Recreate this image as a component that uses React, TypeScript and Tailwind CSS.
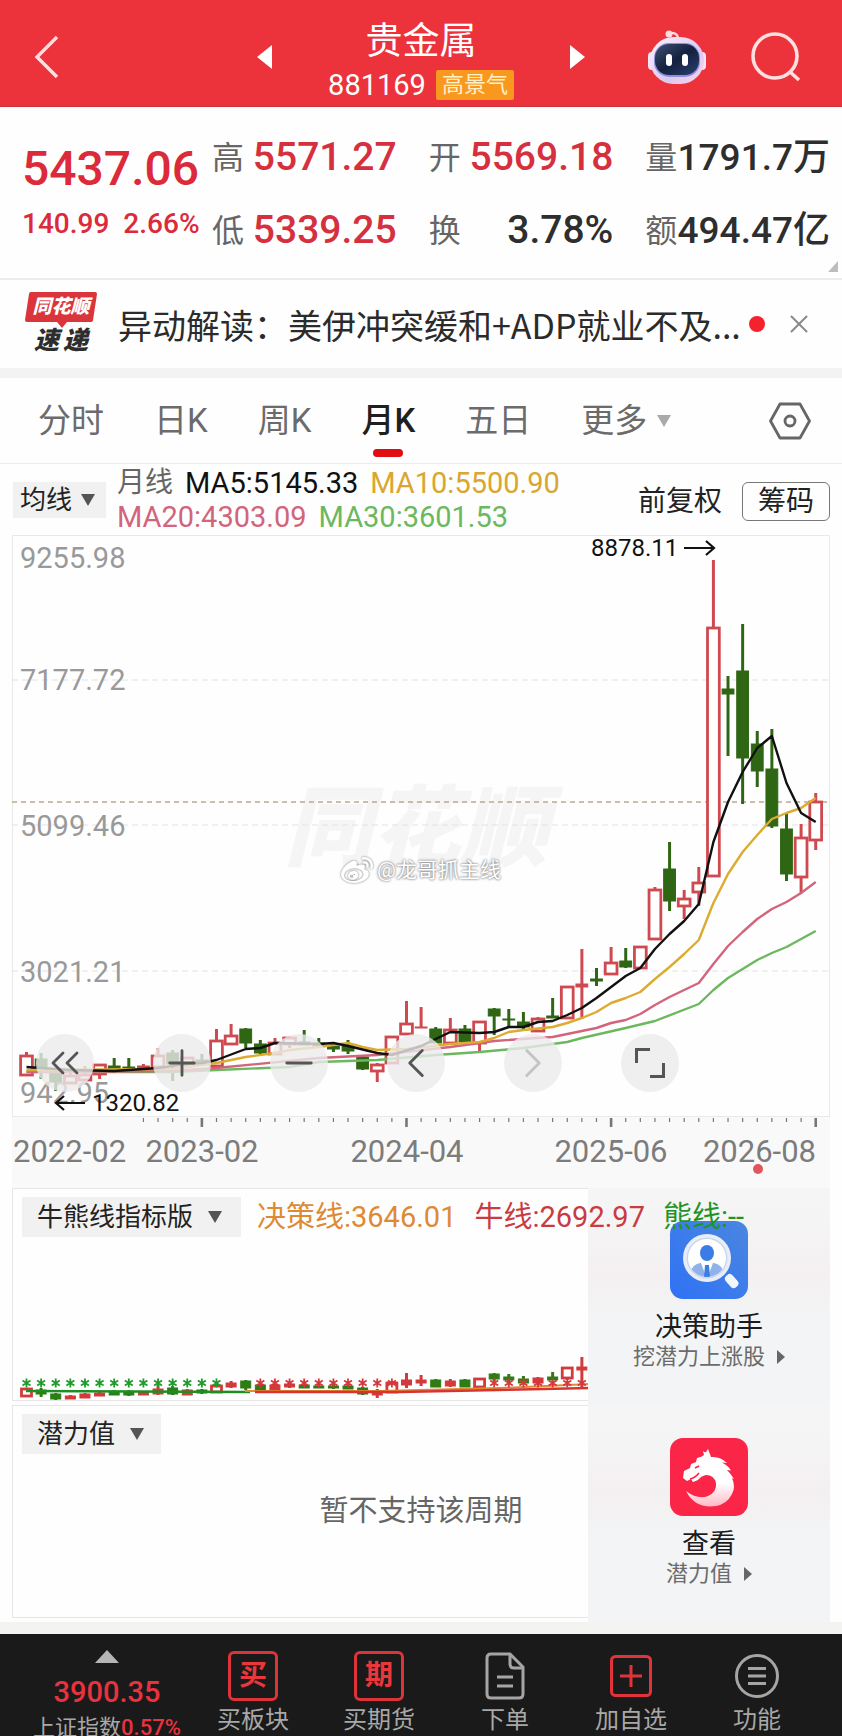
import { ChevronLeft, ChevronRight, ChevronsLeft, Minus, Plus, X } from "lucide-react";
import { FaWeibo } from "react-icons/fa";
import { ReactNode } from "react";

type Candle = [
	color: "r" | "g",
	high: number,
	top: number,
	bottom: number,
	low: number,
];

const RED = "#cf4a50";
const GREEN = "#2f6614";
const STEP = 14.615;
const FIRST_X = 26.5;

const candles: Candle[] = [
	["r", 1052, 1056, 1075, 1076],
	["g", 1053, 1059, 1068, 1079],
	["g", 1068, 1072, 1082, 1091],
	["r", 1072, 1076, 1083, 1083],
	["r", 1066, 1075, 1080, 1080],
	["r", 1064, 1065, 1074, 1079],
	["g", 1058, 1066, 1069, 1069],
	["g", 1058, 1067, 1069, 1069],
	["r", 1064, 1066, 1068, 1068],
	["r", 1048, 1056, 1067, 1067],
	["g", 1050, 1053, 1064, 1081],
	["r", 1057, 1058, 1064, 1064],
	["g", 1054, 1060, 1064, 1064],
	["r", 1029, 1041, 1066, 1066],
	["r", 1024, 1036, 1044, 1044],
	["g", 1028, 1029, 1043, 1048],
	["g", 1040, 1044, 1053, 1056],
	["r", 1038, 1043, 1054, 1054],
	["r", 1036, 1038, 1044, 1048],
	["g", 1030, 1042, 1045, 1045],
	["g", 1038, 1043, 1046, 1046],
	["g", 1044, 1046, 1049, 1052],
	["g", 1040, 1046, 1051, 1054],
	["g", 1056, 1057, 1069, 1070],
	["r", 1063, 1065, 1071, 1082],
	["r", 1037, 1037, 1063, 1063],
	["r", 1001, 1024, 1034, 1034],
	["r", 1007, 1027, 1028, 1028],
	["g", 1027, 1029, 1043, 1043],
	["r", 1018, 1030, 1043, 1043],
	["g", 1025, 1029, 1042, 1042],
	["r", 1021, 1022, 1043, 1052],
	["g", 1008, 1009, 1016, 1035],
	["g", 1009, 1019, 1020, 1027],
	["g", 1012, 1022, 1027, 1031],
	["r", 1017, 1019, 1031, 1031],
	["g", 998, 1016, 1018, 1018],
	["r", 987, 987, 1018, 1019],
	["r", 949, 984, 987, 1019],
	["g", 968, 979, 981, 986],
	["r", 947, 963, 974, 974],
	["g", 948, 961, 967, 968],
	["r", 946, 947, 968, 968],
	["r", 887, 890, 939, 940],
	["g", 842, 869, 901, 911],
	["r", 890, 899, 906, 919],
	["r", 867, 883, 892, 906],
	["r", 560, 628, 876, 877],
	["g", 676, 689, 694, 756],
	["g", 624, 671, 758, 804],
	["g", 731, 744, 771, 787],
	["g", 729, 769, 826, 828],
	["g", 813, 829, 874, 881],
	["r", 824, 838, 877, 893],
	["r", 793, 802, 840, 850],
];

// [candle index, y]
const averages = [
	{
		color: "#6cb85e",
		points: [[0, 1072], [10, 1072], [13, 1070], [18, 1067], [20, 1062], [24, 1060], [28, 1055], [31, 1052], [34, 1048], [37, 1042], [38, 1038], [41, 1028], [43, 1021], [46, 1004], [47, 990], [48, 978], [49, 969], [50, 960], [51, 953], [52, 947], [53, 939], [54, 931]],
	},
	{
		color: "#d2647c",
		points: [[0, 1072], [10, 1071], [13, 1068], [20, 1058], [24, 1055], [29, 1047], [32, 1041], [36, 1037], [38, 1031], [39, 1028], [40, 1023], [41, 1020], [42, 1014], [43, 1005], [44, 997], [46, 983], [47, 964], [48, 946], [49, 932], [50, 919], [51, 909], [52, 902], [53, 893], [54, 882]],
	},
	{
		color: "#dcab30",
		points: [[0, 1070], [10, 1069], [13, 1063], [14, 1060], [15, 1057], [17, 1053], [18, 1050], [20, 1047], [22, 1043], [23, 1047], [24, 1050], [26, 1049], [29, 1044], [31, 1042], [32, 1038], [33, 1032], [34, 1030], [36, 1027], [37, 1023], [38, 1018], [39, 1012], [40, 1003], [41, 998], [42, 992], [43, 979], [44, 967], [45, 954], [46, 940], [47, 903], [48, 874], [49, 852], [50, 835], [51, 819], [52, 813], [53, 808], [54, 798]],
	},
	{
		color: "#111111",
		points: [[0, 1067], [3, 1070], [6, 1071], [9, 1068], [11, 1064], [12, 1063], [13, 1060], [15, 1049], [16, 1048], [17, 1043], [20, 1044], [21, 1043], [22, 1046], [24, 1053], [25, 1055], [27, 1046], [28, 1039], [29, 1032], [31, 1033], [32, 1032], [33, 1027], [34, 1027], [35, 1022], [36, 1021], [37, 1015], [38, 1008], [39, 998], [40, 987], [41, 976], [42, 968], [43, 949], [44, 934], [45, 921], [46, 904], [47, 842], [48, 802], [49, 772], [50, 748], [51, 736], [52, 783], [53, 813], [54, 822]],
	},
];

const priceLabels = [
	{ text: "9255.98", y: 568 },
	{ text: "7177.72", y: 690 },
	{ text: "5099.46", y: 836 },
	{ text: "3021.21", y: 982 },
	{ text: "942.95", y: 1103 },
];

const dates = [
	{ text: "2022-02", x: 13, anchor: "start" },
	{ text: "2023-02", x: 202, anchor: "middle" },
	{ text: "2024-04", x: 407, anchor: "middle" },
	{ text: "2025-06", x: 611, anchor: "middle" },
	{ text: "2026-08", x: 816, anchor: "end" },
] as const;

const miniCandles: Candle[] = [
	["r", 1388, 1389, 1396, 1397],
	["g", 1388, 1390, 1394, 1397],
	["g", 1393, 1394, 1399, 1400],
	["r", 1395, 1396, 1399, 1399],
	["r", 1393, 1394, 1398, 1398],
	["r", 1392, 1393, 1396, 1396],
	["g", 1390, 1392, 1395, 1395],
	["g", 1390, 1392, 1395, 1396],
	["r", 1391, 1392, 1395, 1395],
	["r", 1385, 1389, 1394, 1395],
	["g", 1386, 1388, 1394, 1395],
	["r", 1389, 1390, 1395, 1395],
	["g", 1389, 1390, 1393, 1394],
	["r", 1384, 1386, 1392, 1393],
	["r", 1381, 1383, 1387, 1388],
	["g", 1380, 1381, 1388, 1390],
	["g", 1384, 1385, 1390, 1391],
	["r", 1384, 1385, 1390, 1391],
	["r", 1382, 1384, 1387, 1388],
	["g", 1383, 1385, 1388, 1388],
	["g", 1384, 1386, 1388, 1388],
	["g", 1384, 1386, 1388, 1389],
	["g", 1384, 1386, 1389, 1389],
	["g", 1387, 1388, 1394, 1395],
	["r", 1389, 1391, 1395, 1398],
	["r", 1381, 1383, 1392, 1393],
	["r", 1373, 1380, 1385, 1388],
	["r", 1375, 1380, 1383, 1386],
	["g", 1379, 1380, 1387, 1387],
	["r", 1379, 1381, 1386, 1387],
	["g", 1379, 1380, 1387, 1387],
	["r", 1378, 1379, 1387, 1388],
	["g", 1373, 1374, 1379, 1381],
	["g", 1374, 1377, 1380, 1382],
	["g", 1376, 1379, 1383, 1384],
	["r", 1377, 1378, 1383, 1385],
	["g", 1372, 1377, 1380, 1380],
	["r", 1367, 1368, 1378, 1380],
	["r", 1357, 1367, 1370, 1387],
];

const candleX = (i: number) => FIRST_X + i * STEP;

const toPoints = (points: number[][]) =>
	points.map(([i, y]) => `${candleX(i)},${y}`).join(" ");

const Candles = ({
	data,
	half,
	minHollow,
	red,
	green,
}: {
	data: Candle[];
	half: number;
	minHollow: number;
	red: string;
	green: string;
}) => (
	<>
		{data.map(([color, high, top, bottom, low], i) => {
			const x = candleX(i);
			const stroke = color === "r" ? red : green;
			const hollow = color === "r" && bottom - top >= minHollow;
			return (
				<g key={i} stroke={stroke} strokeWidth={3}>
					<line x1={x} x2={x} y1={high} y2={top} />
					<line x1={x} x2={x} y1={bottom} y2={low} />
					<rect
						x={x - half}
						y={top}
						width={half * 2}
						height={bottom - top}
						fill={hollow ? "#fff" : stroke}
						strokeWidth={hollow ? 2.8 : 1}
					/>
				</g>
			);
		})}
	</>
);

const Star = ({ x, y, color }: { x: number; y: number; color: string }) => (
	<path
		d={`M${x} ${y - 4.5}v9M${x - 4} ${y - 2.5}l8 5M${x + 4} ${y - 2.5}l-8 5`}
		stroke={color}
		strokeWidth={1.8}
	/>
);

const Caret = ({ className = "" }: { className?: string }) => (
	<svg viewBox="0 0 14 12" className={`w-3.5 h-3 shrink-0 ${className}`}>
		<path d="M0 0h14L7 12z" fill="currentColor" />
	</svg>
);

const Dropdown = ({
	label,
	text,
	className,
}: {
	label: string;
	text: string;
	className: string;
}) => (
	<div className={`flex items-center bg-[#f1f1f1] text-[26px] text-[#222] ${className}`}>
		<select aria-label={label} className="appearance-none bg-transparent leading-9">
			<option>{text}</option>
		</select>
		<Caret className="text-[#555]" />
	</div>
);

const Robot = () => (
	<svg viewBox="0 0 58 55" className="w-[58px] h-[55px]">
		<defs>
			<linearGradient id="shell" x1="0" y1="0" x2="1" y2="1">
				<stop offset="0" stopColor="#fdf3fb" />
				<stop offset="0.6" stopColor="#dcc8f2" />
				<stop offset="1" stopColor="#fbd3e6" />
			</linearGradient>
			<linearGradient id="visor" x1="0" y1="0" x2="1" y2="1">
				<stop offset="0" stopColor="#3d5073" />
				<stop offset="0.5" stopColor="#14213f" />
				<stop offset="1" stopColor="#2a3e70" />
			</linearGradient>
		</defs>
		<path d="M21 3q9-1 9 6" fill="none" stroke="#ffd9de" strokeWidth={2.4} />
		<circle cx="21" cy="4" r="3.5" fill="#ffdadf" />
		<rect x="0" y="22" width="8" height="18" rx="4" fill="#f6e4f5" />
		<rect x="50" y="22" width="8" height="18" rx="4" fill="#f6e4f5" />
		<rect x="2" y="7" width="54" height="47" rx="23.5" fill="url(#shell)" />
		<rect x="6" y="13" width="46" height="34" rx="15" fill="#8d8fdc" />
		<rect x="7" y="14" width="44" height="31" rx="14" fill="url(#visor)" />
		<rect x="18" y="24" width="6" height="12" rx="3" fill="#fff" />
		<rect x="34" y="24" width="6" height="12" rx="3" fill="#fff" />
	</svg>
);

const Header = () => (
	<header className="grid grid-cols-[1fr_328px_1fr] items-center h-[107px] pt-2 bg-[#ec323b] border-b border-[#c9323a] text-white">
		<button type="button" aria-label="返回" className="justify-self-start ml-8">
			<svg viewBox="0 0 28 46" className="w-7 h-[46px]">
				<path d="M25 3L5 23l20 20" fill="none" stroke="#ffdfe0" strokeWidth={3.4} />
			</svg>
		</button>
		<div className="flex items-center justify-between">
			<button type="button" aria-label="上一个">
				<svg viewBox="0 0 15 24" className="w-[15px] h-6">
					<path d="M15 0v24L0 12z" fill="#fff" />
				</svg>
			</button>
			<div className="flex flex-col items-center pt-2">
				<h1 className="text-[37px] leading-[48px]">贵金属</h1>
				<div className="flex items-center gap-2.5">
					<span className="text-[29px] leading-[38px]">881169</span>
					<span className="rounded-xs bg-[#f9981f] px-1.5 text-[22px] leading-[30px] text-[#fff0c8]">
						高景气
					</span>
				</div>
			</div>
			<button type="button" aria-label="下一个">
				<svg viewBox="0 0 15 24" className="w-[15px] h-6">
					<path d="M0 0v24l15-12z" fill="#fff" />
				</svg>
			</button>
		</div>
		<div className="flex items-center justify-end gap-11 pr-10">
			<button type="button" aria-label="智能助手">
				<Robot />
			</button>
			<button type="button" aria-label="搜索">
				<svg viewBox="0 0 52 50" className="w-[52px] h-[50px]">
					<circle cx="25" cy="24" r="22" fill="none" stroke="#ffdfe0" strokeWidth={3.6} />
					<path d="M39 39l10 9" stroke="#ffdfe0" strokeWidth={3.6} />
				</svg>
			</button>
		</div>
	</header>
);

const quotes = [
	{ label: "高", value: "5571.27", className: "text-[39px] text-[#d6303e]" },
	{ label: "开", value: "5569.18", className: "text-[39px] text-[#d6303e]" },
	{ label: "量", value: "1791.7万", className: "text-[37px] text-[#2e2e2e]" },
	{ label: "低", value: "5339.25", className: "text-[39px] text-[#d6303e]" },
	{ label: "换", value: "3.78%", className: "text-[39px] text-[#2e2e2e]" },
	{ label: "额", value: "494.47亿", className: "text-[37px] text-[#2e2e2e]" },
];

const Quote = () => (
	<section className="relative flex h-[173px] pl-[22px] pr-3 border-b-2 border-[#ececec]">
		<div className="w-[190px] pt-8 font-medium text-[#dc2a3a]">
			<p className="text-[48px] leading-[60px]">5437.06</p>
			<p className="mt-2 flex gap-3.5 text-[28px] leading-[34px]">
				<span>140.99</span>
				<span>2.66%</span>
			</p>
		</div>
		<dl className="flex-1 grid grid-cols-3 content-start gap-x-8 pt-3.5">
			{quotes.map((quote) => (
				<div
					key={quote.label}
					className="flex items-center justify-between whitespace-nowrap h-[73px]"
				>
					<dt className="text-[32px] text-[#666]">{quote.label}</dt>
					<dd className={`font-medium ${quote.className}`}>{quote.value}</dd>
				</div>
			))}
		</dl>
		<svg viewBox="0 0 10 11" className="absolute right-1 bottom-1.5 w-2.5 h-[11px]">
			<path d="M10 0v11H0z" fill="#bdbdbd" />
		</svg>
	</section>
);

const News = () => (
	<section className="flex items-center h-[98px] px-6 border-b-10 border-[#f3f3f3]">
		<div className="flex flex-col w-[74px] items-center mr-5">
			<span className="relative flex justify-center w-[72px] h-[30px]">
				<svg viewBox="0 0 72 36" className="absolute inset-x-0 top-0 w-[72px] h-9">
					<path
						d="M6 0h64q2 0 2 2l-4 26q0 2-3 2H42l-5 6-5-6H2q-2 0-2-2L4 2q0-2 2-2z"
						fill="#d9353b"
					/>
				</svg>
				<span className="relative text-[19px] leading-[29px] font-black italic text-white">
					同花顺
				</span>
			</span>
			<span className="flex gap-1 mt-1 text-[25px] leading-[30px] font-black italic text-[#2d2d2d]">
				<span>速</span>
				<span>递</span>
			</span>
		</div>
		<p className="flex-1 whitespace-nowrap font-['Noto_Sans_CJK_SC',sans-serif] text-[34px] text-[#2b2b2b]">
			异动解读：美伊冲突缓和+ADP就业不及...
		</p>
		<span className="size-4 rounded-full bg-[#f5222d]" />
		<button type="button" aria-label="关闭" className="ml-[19px] mr-1">
			<X size={30} strokeWidth={1.6} color="#8a8a8a" />
		</button>
	</section>
);

const tabs = ["分时", "日K", "周K", "月K", "五日"];

const Tabs = () => (
	<nav className="flex items-center h-[86px] pl-[38px] pr-[31px] border-b border-[#ebebeb] text-[33px] text-[#6b6b6b]">
		<div className="flex flex-1 gap-[50px]">
			{tabs.map((tab) =>
				tab === "月K" ? (
					<button key={tab} type="button" className="relative font-medium text-[#1f1f1f]">
						{tab}
						<span className="absolute left-1/2 -bottom-3 h-2 w-[30px] -translate-x-1/2 rounded-sm bg-[#e00d12]" />
					</button>
				) : (
					<button key={tab} type="button">
						{tab}
					</button>
				),
			)}
			<button type="button" className="flex items-center gap-2.5">
				更多
				<Caret className="text-[#aaa]" />
			</button>
		</div>
		<button type="button" aria-label="设置">
			<svg viewBox="0 0 42 38" className="w-[42px] h-[38px]">
				<g fill="none" stroke="#666" strokeWidth={2.8} strokeLinejoin="round">
					<path d="M11 2h20l9.500 17L31 36H11L1.500 19z" />
					<circle cx="21" cy="19" r="5" />
				</g>
			</svg>
		</button>
	</nav>
);

const Averages = () => (
	<div className="flex items-center h-[71px] pl-[13px] pr-3">
		<Dropdown label="指标" text="均线" className="h-9 w-[93px] pl-[7px] gap-2" />
		<div className="ml-[11px] flex-1 text-[29px] leading-[34px] whitespace-nowrap">
			<p className="flex gap-3">
				<span className="text-[28px] text-[#666]">月线</span>
				<span className="text-[#111]">MA5:5145.33</span>
				<span className="text-[#d9a62e]">MA10:5500.90</span>
			</p>
			<p className="flex gap-3">
				<span className="text-[#d2647c]">MA20:4303.09</span>
				<span className="text-[#6cb85e]">MA30:3601.53</span>
			</p>
		</div>
		<div className="flex items-center gap-5 pt-1 text-[28px] text-[#222]">
			<button type="button">前复权</button>
			<button
				type="button"
				className="w-[88px] h-[39px] rounded-md border border-[#777] leading-9"
			>
				筹码
			</button>
		</div>
	</div>
);

const RoundButton = ({ label, children }: { label: string; children: ReactNode }) => (
	<button
		type="button"
		aria-label={label}
		className="flex size-[58px] items-center justify-center rounded-full bg-[#ebebeb]/80 text-[#555]"
	>
		{children}
	</button>
);

const MainChart = () => (
	<section className="relative mx-3">
		<svg viewBox="12 535 818 653" className="block w-full h-auto">
			<rect x="12" y="1117" width="818" height="71" fill="#f9f9f9" />
			<rect x="12.500" y="535.500" width="817" height="581" fill="#fefefe" stroke="#e9e9e9" />
			<text
				x="416"
				y="859"
				textAnchor="middle"
				fontSize="88"
				fontWeight="900"
				fontStyle="italic"
				fill="#f5f5f5"
			>
				同花顺
			</text>
			{[680, 825, 971].map((y) => (
				<line key={y} x1="12" x2="829" y1={y} y2={y} stroke="#e2e2e2" strokeDasharray="6 4" />
			))}
			<line x1="12" x2="829" y1="802" y2="802" stroke="#b9a987" strokeWidth="1.500" strokeDasharray="5 4" />
			<g fontSize="29" fill="#999">
				{priceLabels.map((label) => (
					<text key={label.text} x="20" y={label.y}>
						{label.text}
					</text>
				))}
			</g>

			<Candles data={candles} half={5.9} minHollow={5} red={RED} green={GREEN} />
			{averages.map((line) => (
				<polyline
					key={line.color}
					points={toPoints(line.points)}
					fill="none"
					stroke={line.color}
					strokeWidth="2.400"
					strokeLinejoin="round"
				/>
			))}

			<g fontSize="24" fill="#111">
				<text x="591" y="556">8878.11</text>
				<text x="92" y="1111">1320.82</text>
			</g>
			<g fill="none" stroke="#111" strokeWidth="2.200">
				<path d="M684 548h30M706 541l8 7-8 7" />
				<path d="M85 1103H56M64 1096l-8 7 8 7" />
			</g>

			{Array.from({ length: 47 }, (_, k) => k + 8).map((i) => {
				const major = i === 12 || i === 26 || i === 40 || i === 54;
				return (
					<line
						key={i}
						x1={candleX(i)}
						x2={candleX(i)}
						y1="1118"
						y2={major ? 1127 : 1122}
						stroke="#777"
						strokeWidth={major ? 2.6 : 1.2}
					/>
				);
			})}
			<g fontSize="31" fill="#7c7c7c">
				{dates.map((date) => (
					<text key={date.text} x={date.x} y="1162" textAnchor={date.anchor}>
						{date.text}
					</text>
				))}
			</g>
			<circle cx="758" cy="1169" r="5" fill="#e0575b" />
		</svg>
		<div className="absolute inset-x-0 top-80 flex items-center justify-center gap-1 text-[21px] text-white [text-shadow:0_0_2px_#777,0_0_3px_#999]">
			<FaWeibo size={32} color="#fff" className="[filter:drop-shadow(0_0_1px_#777)]" />
			<span>@龙哥抓主线</span>
		</div>
		<div className="absolute left-6 bottom-24 flex gap-[59px]">
			<RoundButton label="最早">
				<ChevronsLeft size={48} strokeWidth={1.4} />
			</RoundButton>
			<RoundButton label="放大">
				<Plus size={42} strokeWidth={1.6} />
			</RoundButton>
			<RoundButton label="缩小">
				<Minus size={42} strokeWidth={1.6} />
			</RoundButton>
			<RoundButton label="向前">
				<ChevronLeft size={50} strokeWidth={1.4} />
			</RoundButton>
			<RoundButton label="向后">
				<ChevronRight size={50} strokeWidth={1.4} color="#c4c4c4" />
			</RoundButton>
			<RoundButton label="全屏">
				<svg viewBox="0 0 30 30" className="size-[30px]">
					<path d="M1.500 15V1.500H15M28.500 15v13.500H15" fill="none" stroke="currentColor" strokeWidth={3} />
				</svg>
			</RoundButton>
		</div>
	</section>
);

const AdvisorIcon = () => (
	<svg viewBox="0 0 78 78" className="size-[78px]">
		<defs>
			<linearGradient id="blue" x1="1" y1="0" x2="0" y2="1">
				<stop offset="0" stopColor="#4b86e0" />
				<stop offset="1" stopColor="#2f72f5" />
			</linearGradient>
			<clipPath id="lens">
				<circle cx="37" cy="37" r="19" />
			</clipPath>
		</defs>
		<rect width="78" height="78" rx="13" fill="url(#blue)" />
		<circle cx="37" cy="37" r="24" fill="#e9eef6" />
		<circle cx="37" cy="37" r="20.500" fill="#c9d8ee" />
		<circle cx="37" cy="37" r="19" fill="#fff" />
		<g clipPath="url(#lens)">
			<path d="M20 56q0-12 10-14h14q10 2 10 14z" fill="#8fb2ea" />
			<path d="M31 42l6 16 6-16z" fill="#fff" />
			<path d="M35 44h4l1 12h-6z" fill="#3b7ce6" />
			<ellipse cx="37" cy="32" rx="7" ry="8" fill="#3b7ce6" />
		</g>
		<rect x="-4" y="-7" width="9" height="15" rx="4" fill="#f1f5fc" transform="translate(61 60) rotate(-42)" />
	</svg>
);

const DragonIcon = () => (
	<svg viewBox="0 0 78 78" className="size-[78px]">
		<defs>
			<linearGradient id="dragon" x1="0" y1="0" x2="0" y2="1">
				<stop offset="0.600" stopColor="#fff" />
				<stop offset="1" stopColor="#ffb9c6" />
			</linearGradient>
		</defs>
		<rect width="78" height="78" rx="13" fill="#fb2547" />
		<path
			d="M38 11l3 8q9-1 16 6l-5-.500q6 3 9 8l-4-.500q4 4 7 9l-2-1q4 9 0 16-5 10-16 12-21 3-30-15 12 9 22 5 9-4 8-13-2-8-10-8-5 1-8 5l-5 2-2-3-4 2-4-3 1-7 6-3 1-4 5-2 1-4q5-1 7-3l-1-4q2 2 3 1z"
			fill="url(#dragon)"
		/>
		<path d="M20 41q5-1 9-6M25 30l4-2" fill="none" stroke="#fb2547" strokeWidth={1.6} />
	</svg>
);

const AsideItem = ({
	icon,
	title,
	text,
}: {
	icon: ReactNode;
	title: string;
	text: string;
}) => (
	<a
		href="#"
		className="flex flex-col items-center h-[217px] pt-[33px] bg-linear-to-b from-[#f5f5f6] from-10% via-[#f4f0f1] via-40% to-[#f2f4f5] to-60%"
	>
		{icon}
		<span className="mt-2.5 text-[27px] leading-9 text-[#1c1c1c]">{title}</span>
		<span className="flex items-center gap-3 text-[22px] leading-6 text-[#6b6b6b]">
			{text}
			<svg viewBox="0 0 8 14" className="w-2 h-3.5">
				<path d="M0 0v14l8-7z" fill="#666" />
			</svg>
		</span>
	</a>
);

const Indicators = () => (
	<section className="relative mx-3">
		<div className="relative h-[213px] border border-[#e6e6e6]">
			<div className="flex items-center h-14 pl-[9px]">
				<Dropdown label="主指标" text="牛熊线指标版" className="h-10 w-[219px] pl-[15px] gap-3.5" />
				<p className="relative z-10 ml-4 flex gap-[18px] pt-0.5 whitespace-nowrap text-[29px]">
					<span className="text-[#de8a35]">决策线:3646.01</span>
					<span className="text-[#c93b41]">牛线:2692.97</span>
					<span className="text-[#1f9426]">熊线:--</span>
				</p>
			</div>
			<svg viewBox="13 1245 816 155" className="block w-full h-auto">
				<Candles data={miniCandles} half={5} minHollow={6} red="#d23a3c" green="#2d7d14" />
				<polyline points="26,1391 250,1392" fill="none" stroke="#1d8f22" strokeWidth="2.500" />
				<polyline points="245,1391 380,1391 500,1388 590,1384" fill="none" stroke="#e08a35" strokeWidth="2" />
				<polyline points="255,1392 400,1392 590,1388" fill="none" stroke="#d5352e" strokeWidth="2.500" />
				{miniCandles.map((_, i) => {
					if (i === 14 || i === 15 || (i > 25 && i < 32)) return null;
					return (
						<Star
							key={i}
							x={candleX(i)}
							y={1383}
							color={i < 14 ? "#1f9b2c" : "#d5383c"}
						/>
					);
				})}
			</svg>
		</div>
		<div className="mt-1 h-[213px] border border-[#e6e6e6] pt-2 pl-[9px]">
			<Dropdown label="副指标" text="潜力值" className="h-10 w-[139px] pl-[15px] gap-3.5" />
			<p className="mt-8 pr-[9px] text-center text-[29px] leading-[50px] text-[#666]">
				暂不支持该周期
			</p>
		</div>
		<aside className="absolute right-0 top-0 w-[242px] h-[434px] bg-[#f4f5f7]">
			<AsideItem icon={<AdvisorIcon />} title="决策助手" text="挖潜力上涨股" />
			<AsideItem icon={<DragonIcon />} title="查看" text="潜力值" />
		</aside>
	</section>
);

const BoxedGlyph = ({ children }: { children: string }) => (
	<span className="flex w-[50px] h-[50px] items-center justify-center rounded-md border-3 border-[#dc3438] text-[28px] leading-none font-bold text-[#e8383c]">
		{children}
	</span>
);

const actions = [
	{ label: "买板块", icon: <BoxedGlyph>买</BoxedGlyph> },
	{ label: "买期货", icon: <BoxedGlyph>期</BoxedGlyph> },
	{
		label: "下单",
		icon: (
			<svg viewBox="0 0 40 48" className="w-10 h-12" fill="none" stroke="#a5a5a5" strokeWidth={3}>
				<path d="M6 2h19l13 13v27q0 4-4 4H6q-4 0-4-4V6q0-4 4-4z" />
				<path d="M25 2v10q0 4 4 4h9M12 25h16M12 34h16" />
			</svg>
		),
	},
	{
		label: "加自选",
		icon: (
			<svg viewBox="0 0 42 42" className="size-[42px]" fill="none" stroke="#e0343a" strokeWidth={3}>
				<rect x="1.500" y="1.500" width="39" height="39" rx="4" />
				<path d="M21 10v22M10 21h22" />
			</svg>
		),
	},
	{
		label: "功能",
		icon: (
			<svg viewBox="0 0 44 44" className="size-11" fill="none" stroke="#a5a5a5" strokeWidth={3}>
				<circle cx="22" cy="22" r="20.500" />
				<path d="M13 14.500h18M13 22h18M13 29.500h18" />
			</svg>
		),
	},
];

const BottomBar = () => (
	<footer className="flex h-[102px] overflow-hidden bg-[#1a1a1a] pr-[22px] text-[#a8a8a8]">
		<button type="button" className="flex flex-col items-center justify-start w-[190px] pl-6 pt-4 whitespace-nowrap">
			<svg viewBox="0 0 24 13" className="w-6 h-[13px] shrink-0">
				<path d="M12 0l12 13H0z" fill="#b5b5b5" />
			</svg>
			<span className="mt-2.5 text-[29px] leading-[38px] font-medium text-[#e8323e]">3900.35</span>
			<span className="text-[22px] leading-[34px]">
				上证指数<span className="font-medium text-[#e8323e]">0.57%</span>
			</span>
		</button>
		{actions.map((action) => (
			<button
				key={action.label}
				type="button"
				className="flex flex-1 flex-col items-center justify-start pt-4"
			>
				<span className="flex h-[52px] items-center">{action.icon}</span>
				<span className="pt-0.5 text-2xl leading-8">{action.label}</span>
			</button>
		))}
	</footer>
);

const App = () => {
	return (
		<main className="min-h-screen bg-[#fefefe] font-['Roboto','Noto_Sans_CJK_SC',sans-serif]">
			<Header />
			<Quote />
			<News />
			<Tabs />
			<Averages />
			<MainChart />
			<Indicators />
			<div className="mt-1 h-3 bg-[#f3f3f2]" />
			<BottomBar />
		</main>
	);
};

export default App;
